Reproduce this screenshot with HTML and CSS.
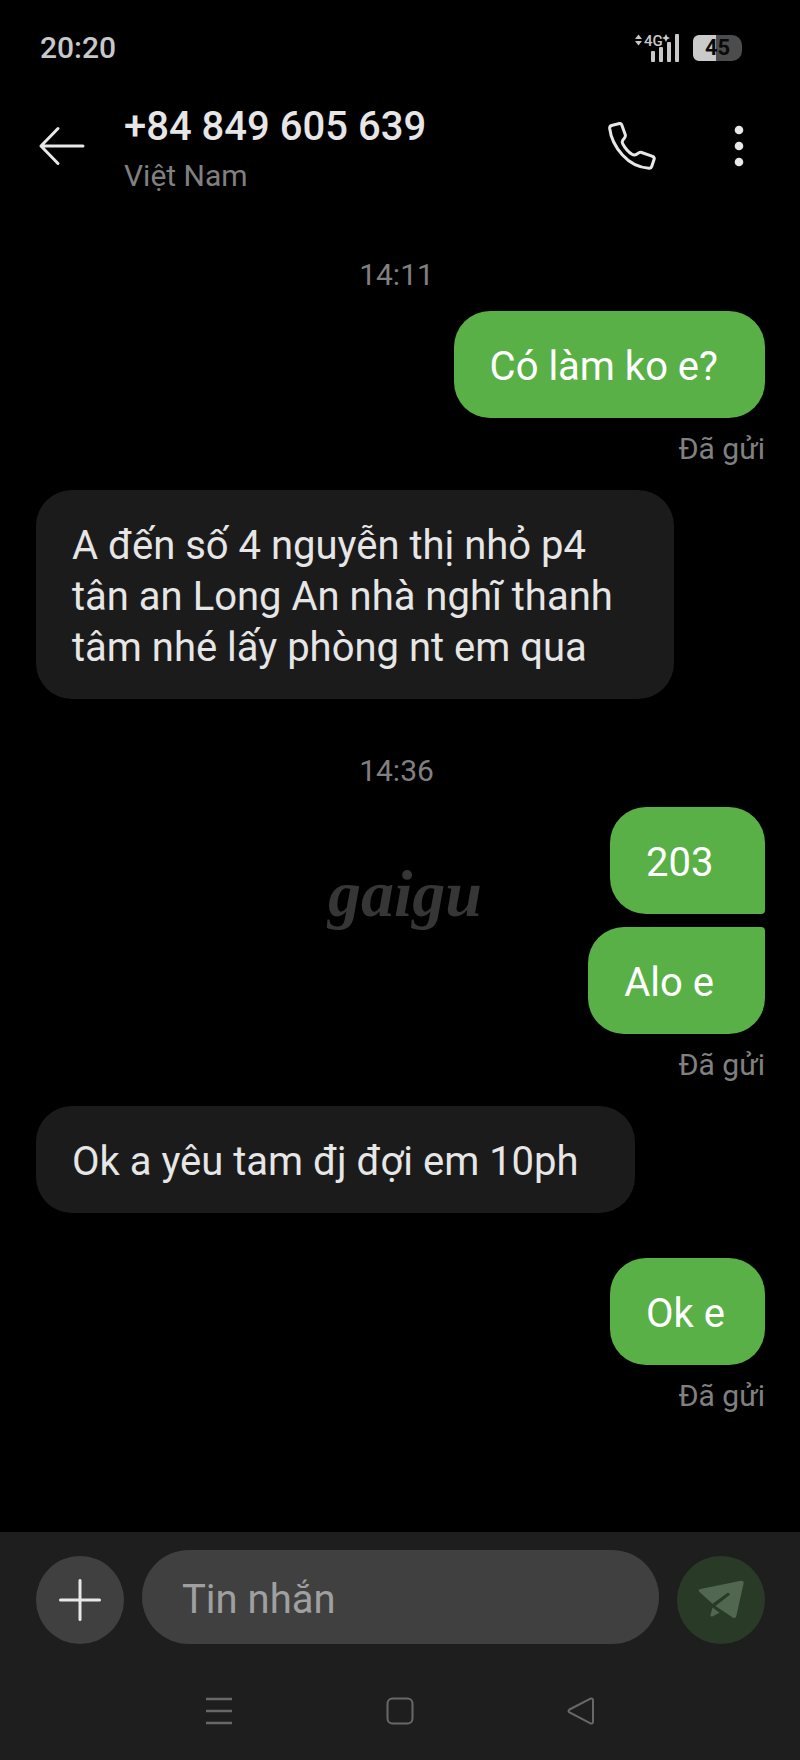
FILE: index.html
```html
<!DOCTYPE html>
<html lang="vi">
<head>
<meta charset="utf-8">
<meta name="viewport" content="width=device-width, initial-scale=1">
<title>Tin nhắn</title>
<link rel="stylesheet" href="styles.css">
</head>
<body class="screen">
<div class="status-bar">
  <span class="clock">20:20</span>
  <div class="status-icons">
    <svg class="signal" width="46" height="30" viewBox="0 0 46 30" aria-hidden="true">
      <path d="M0 6 3.500 1.500 7 6ZM0 8 3.500 12.500 7 8Z"/>
      <text x="9" y="13" class="net">4G</text>
      <path d="M31 1l1.300 2.700L35 5l-2.700 1.300L31 9l-1.300-2.700L27 5l2.700-1.300Z"/>
      <rect x="16" y="18" width="4" height="11" rx="1"/>
      <rect x="24" y="14" width="4" height="15" rx="1"/>
      <rect x="32" y="9" width="4" height="20" rx="1"/>
      <rect x="40" y="1" width="4" height="28" rx="1"/>
    </svg>
    <span class="battery">45</span>
  </div>
</div>
<header class="header">
  <button class="icon-button" aria-label="Quay lại">
    <svg width="48" height="48" viewBox="0 0 48 48"><path d="M45 24H3M20 6.500 3 24l17 17.500" fill="none" stroke="#e8e8e8" stroke-width="3" stroke-linecap="round" stroke-linejoin="round"/></svg>
  </button>
  <div class="contact">
    <h1 class="contact-name">+84 849 605 639</h1>
    <p class="contact-place">Việt Nam</p>
  </div>
  <button class="icon-button" aria-label="Gọi">
    <svg width="48" height="48" viewBox="0 0 48 48"><path d="M3.500 3.500 11.500 1.500Q13 1.200 13.700 2.700L17.300 12.800Q17.700 14.300 16.600 15.800L14.800 18.200Q13.700 20 14.800 22 18.500 28.800 24 32.300 26.500 33.800 28.600 32.200L31 30.700Q32.200 30 33.600 30.500L44 34.200Q46.600 35 46.200 37L43.700 44.500Q43 46.500 41 46.200 25.500 45.300 14.500 33 3.300 20.500 1.700 6.500 1.500 4.200 3.500 3.500Z" fill="none" stroke="#e8e8e8" stroke-width="3" stroke-linejoin="round"/></svg>
  </button>
  <button class="icon-button more" aria-label="Thêm">
    <svg width="10" height="48" viewBox="0 0 10 48"><g fill="#e8e8e8"><circle cx="5" cy="8" r="4.300"/><circle cx="5" cy="24" r="4.300"/><circle cx="5" cy="40" r="4.300"/></g></svg>
  </button>
</header>
<main class="thread">
  <time class="stamp">14:11</time>
  <p class="bubble sent">Có làm ko e?</p>
  <span class="receipt">Đã gửi</span>
  <p class="bubble received">A đến số 4 nguyễn thị nhỏ p4 tân an Long An nhà nghĩ thanh tâm nhé lấy phòng nt em qua</p>
  <time class="stamp later">14:36</time>
  <p class="bubble sent first">203</p>
  <p class="bubble sent last">Alo e</p>
  <span class="receipt">Đã gửi</span>
  <p class="bubble received">Ok a yêu tam đj đợi em 10ph</p>
  <p class="bubble sent reply">Ok e</p>
  <span class="receipt">Đã gửi</span>
  <span class="watermark">gaigu</span>
</main>
<footer class="footer">
  <form class="composer">
    <button type="button" class="round add" aria-label="Thêm tệp">
      <svg width="42" height="42" viewBox="0 0 42 42"><path d="M21 1.500v39M1.500 21h39" stroke="#e8e8e8" stroke-width="3" stroke-linecap="round"/></svg>
    </button>
    <input class="field" type="text" placeholder="Tin nhắn" aria-label="Tin nhắn">
    <button type="button" class="round send" aria-label="Gửi">
      <svg width="46" height="40" viewBox="0 0 46 40"><g fill="#51674f"><path d="M2.500 9 43 .8Q46 .4 45.600 3.500L38.300 36Q37.500 39 34.700 37.500L17.500 26 31.500 15Q32.200 13.800 31.200 13.300L29.800 12.800 14.500 23.800 1 11.500Q0 9.700 2.500 9Z"/><path d="M14.500 27.500 21.500 32.800 14.200 36.500Q12.300 37 12.500 35Z"/></g></svg>
    </button>
  </form>
  <nav class="system-nav">
    <button class="icon-button" aria-label="Ứng dụng gần đây"><svg width="28" height="28" viewBox="0 0 28 28"><path d="M1 2h26M1 14h26M1 26h26" stroke="#686868" stroke-width="2.500"/></svg></button>
    <button class="icon-button" aria-label="Màn hình chính"><svg width="28" height="28" viewBox="0 0 28 28"><rect x="1.500" y="1.500" width="25" height="25" rx="5" fill="none" stroke="#686868" stroke-width="2"/></svg></button>
    <button class="icon-button" aria-label="Trở về"><svg width="28" height="28" viewBox="0 0 28 28"><path d="M2.500 12.500 23 1.800Q26 .8 26 3.500v21Q26 27.200 23 26.200L2.500 15.500Q.5 14 2.500 12.500Z" fill="none" stroke="#686868" stroke-width="2"/></svg></button>
  </nav>
</footer>
</body>
</html>
```
FILE: styles.css
```css
* { box-sizing: border-box; }

.screen {
  margin: 0;
  min-height: 100vh;
  display: flex;
  flex-direction: column;
  background: #000;
  color: #e6e6e6;
  font-family: Roboto, "Noto Sans", sans-serif;
  font-size: 30px;
  line-height: 36px;
}

.status-bar {
  display: flex;
  justify-content: space-between;
  align-items: center;
  padding: 30px 58px 0 40px;
}

.clock { font-weight: 500; color: #c8c8c8; }

.status-icons { display: flex; align-items: center; gap: 12px; }

.signal { fill: #c8c8c8; }

.net { font-size: 15px; font-weight: 500; }

.battery {
  width: 49px;
  height: 26px;
  border-radius: 6px 10px 10px 6px;
  background: linear-gradient(90deg, #cacaca 46%, #4c4c4c 46%);
  color: #0a0a0a;
  font-size: 22px;
  font-weight: 700;
  line-height: 26px;
  text-align: center;
}

.header {
  display: flex;
  align-items: center;
  padding: 31px 56px 0 38px;
}

.icon-button {
  display: block;
  padding: 0;
  border: 0;
  background: none;
  line-height: 0;
}

.contact { flex: 1; padding: 6px 0 0 38px; }

.contact-name {
  margin: 0;
  font-size: 40px;
  font-weight: 500;
  line-height: 47px;
}

.contact-place { margin: 8px 0 0; color: #808080; }

.more { margin-left: 78px; }

.thread {
  position: relative;
  flex: 1;
  display: flex;
  flex-direction: column;
  padding: 63px 35px 40px 36px;
}

.stamp {
  align-self: center;
  padding-right: 8px;
  margin-bottom: 18px;
  color: #808080;
}

.later { margin-top: 54px; }

.bubble {
  margin: 0;
  border-radius: 36px;
  font-size: 40px;
  line-height: 51px;
}

.sent {
  align-self: flex-end;
  min-width: 155px;
  padding: 30px 47px 26px 36px;
  background: #59b047;
  color: #fff;
}

.received {
  align-self: flex-start;
  max-width: 638px;
  margin-top: 23px;
  padding: 30px 56px 26px 36px;
  background: #1b1b1b;
}

.first { border-bottom-right-radius: 4px; }

.last {
  margin-top: 13px;
  padding-right: 51px;
  border-top-right-radius: 4px;
}

.reply {
  margin-top: 45px;
  padding-right: 40px;
}

.receipt {
  align-self: flex-end;
  margin-top: 13px;
  color: #808080;
}

.watermark {
  position: absolute;
  top: 668px;
  left: 41%;
  color: #363636;
  font-family: "Liberation Serif", serif;
  font-size: 66px;
  font-style: italic;
  font-weight: 700;
  line-height: 64px;
}

.footer { background: #1e1e1e; }

.composer {
  display: flex;
  align-items: flex-end;
  gap: 18px;
  padding: 18px 35px 0 36px;
}

.round {
  flex: none;
  display: grid;
  place-items: center;
  width: 88px;
  height: 88px;
  padding: 0;
  border: 0;
  border-radius: 50%;
}

.add { background: #404040; }

.send { background: #293b27; }

.field {
  flex: 1;
  min-width: 0;
  height: 94px;
  padding: 4px 40px 0;
  border: 0;
  border-radius: 47px;
  background: #404040;
  color: #e6e6e6;
  font: 40px Roboto, "Noto Sans", sans-serif;
}

.field::placeholder { color: #a0a0a0; opacity: 1; }

.system-nav {
  display: grid;
  grid-template-columns: repeat(3, 1fr);
  justify-items: center;
  padding: 53px 16% 35px;
}
```
